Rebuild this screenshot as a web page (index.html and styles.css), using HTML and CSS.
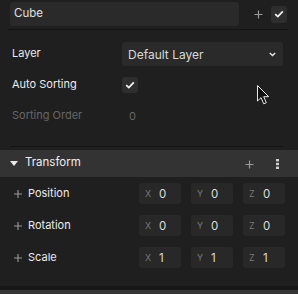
FILE: index.html
```html
<!DOCTYPE html>
<html>
<head>
<meta charset="utf-8">
<link rel="stylesheet" href="styles.css">
</head>
<body>
<div class="panel">
  <div class="top">
    <div class="name-input">Cube</div>
    <span class="icon-plus top-plus">
      <svg width="9" height="9" viewBox="0 0 9 9"><path d="M4.5 0.5v8M0.5 4.5h8" stroke="#9a9a9a" stroke-width="1.2"/></svg>
    </span>
    <span class="checkbox top-check">
      <svg width="10" height="8" viewBox="0 0 10 8"><path d="M1.2 4.2l2.6 2.4 5-5.2" fill="none" stroke="#f2f2f2" stroke-width="1.8"/></svg>
    </span>
  </div>
  <div class="divider d1"></div>

  <div class="props">
    <div class="prop">
      <span class="label">Layer</span>
      <div class="select">
        <span>Default Layer</span>
        <svg width="7" height="5" viewBox="0 0 7 5"><path d="M0.8 1l2.7 2.6L6.2 1" fill="none" stroke="#e6e6e6" stroke-width="1.4"/></svg>
      </div>
    </div>
    <div class="prop">
      <span class="label">Auto Sorting</span>
      <span class="checkbox">
        <svg width="10" height="8" viewBox="0 0 10 8"><path d="M1.2 4.2l2.6 2.4 5-5.2" fill="none" stroke="#f2f2f2" stroke-width="1.8"/></svg>
      </span>
    </div>
    <div class="prop dim">
      <span class="label">Sorting Order</span>
      <span class="value">0</span>
    </div>
  </div>
  <div class="divider d2"></div>

  <div class="section-head">
    <svg class="caret" width="8" height="5" viewBox="0 0 8 5"><path d="M0 0h8L4 5z" fill="#e8e8e8"/></svg>
    <span class="title">Transform</span>
    <span class="head-plus">
      <svg width="9" height="9" viewBox="0 0 9 9"><path d="M4.5 0.5v8M0.5 4.5h8" stroke="#9a9a9a" stroke-width="1.2"/></svg>
    </span>
    <span class="dots">
      <svg width="3" height="10" viewBox="0 0 3 10"><rect x="0" y="0" width="3" height="2.4" fill="#d0d0d0"/><rect x="0" y="3.8" width="3" height="2.4" fill="#d0d0d0"/><rect x="0" y="7.6" width="3" height="2.4" fill="#d0d0d0"/></svg>
    </span>
  </div>

  <div class="vectors">
    <div class="vec-row">
      <span class="vec-plus"><svg width="8" height="8" viewBox="0 0 8 8"><path d="M4 0v8M0 4h8" stroke="#9a9a9a" stroke-width="1.1"/></svg></span>
      <span class="vec-label">Position</span>
      <div class="fields">
        <div class="field"><span class="axis">X</span><span class="num">0</span></div>
        <div class="field"><span class="axis">Y</span><span class="num">0</span></div>
        <div class="field"><span class="axis">Z</span><span class="num">0</span></div>
      </div>
    </div>
    <div class="vec-row">
      <span class="vec-plus"><svg width="8" height="8" viewBox="0 0 8 8"><path d="M4 0v8M0 4h8" stroke="#9a9a9a" stroke-width="1.1"/></svg></span>
      <span class="vec-label">Rotation</span>
      <div class="fields">
        <div class="field"><span class="axis">X</span><span class="num">0</span></div>
        <div class="field"><span class="axis">Y</span><span class="num">0</span></div>
        <div class="field"><span class="axis">Z</span><span class="num">0</span></div>
      </div>
    </div>
    <div class="vec-row">
      <span class="vec-plus"><svg width="8" height="8" viewBox="0 0 8 8"><path d="M4 0v8M0 4h8" stroke="#9a9a9a" stroke-width="1.1"/></svg></span>
      <span class="vec-label">Scale</span>
      <div class="fields">
        <div class="field"><span class="axis">X</span><span class="num">1</span></div>
        <div class="field"><span class="axis">Y</span><span class="num">1</span></div>
        <div class="field"><span class="axis">Z</span><span class="num">1</span></div>
      </div>
    </div>
  </div>

  <div class="bottom-line"></div>
  <div class="bottom-bar"></div>

  <svg class="cursor" width="13" height="21" viewBox="0 0 13 21">
    <path d="M0.5 0.5v15.5l3.6-3.4 2.6 6.2 2.6-1.1-2.6-6h5z" fill="#111" stroke="#e8e8e8" stroke-width="1"/>
  </svg>
</div>
</body>
</html>
```

FILE: styles.css
```css
* { box-sizing: border-box; }
html, body {
  margin: 0;
  padding: 0;
  background: #1f1f1f;
}
body {
  width: 298px;
  height: 294px;
  overflow: hidden;
  font-family: Inter, "Noto Sans", sans-serif;
  color: #e6e6e6;
}
.panel {
  position: relative;
  width: 298px;
  height: 294px;
  display: flex;
  flex-direction: column;
}
.top {
  display: flex;
  align-items: center;
  height: 24px;
  margin-top: 2px;
  padding-left: 10px;
}
.name-input {
  width: 229px;
  height: 24px;
  background: #2a2a2a;
  border-radius: 3px;
  padding-left: 4px;
  font-size: 11.5px;
  line-height: 23px;
  color: #e0e0e0;
}
.top-plus {
  display: flex;
  margin-left: 15px;
}
.checkbox {
  width: 16px;
  height: 16px;
  background: #2e2e2e;
  border-radius: 3px;
  display: flex;
  align-items: center;
  justify-content: center;
}
.top-check {
  margin-left: 8px;
  width: 16px;
  height: 17px;
}
.divider {
  height: 1px;
  background: #141414;
}
.d1 { margin: 3px 10px 0 8px; }
.props {
  display: flex;
  flex-direction: column;
  gap: 7px;
  margin-top: 12px;
  padding-left: 12px;
}
.prop {
  display: flex;
  align-items: center;
  height: 24px;
}
.label {
  width: 110px;
  font-size: 11px;
  line-height: 14px;
  margin-top: -3px;
  color: #ececec;
}
.select {
  width: 161px;
  height: 24px;
  background: #2a2a2a;
  border-radius: 3px;
  display: flex;
  align-items: center;
  justify-content: space-between;
  padding: 0 7px 0 6px;
  font-size: 12px;
  color: #d8d8d8;
}
.dim .label, .dim .value { color: #666; }
.value {
  font-size: 11px;
  padding-left: 7px;
}
.d2 { margin: 18px 15px 0 10px; }
.section-head {
  margin-top: 3px;
  height: 27px;
  background: #333333;
  display: flex;
  align-items: center;
  padding-left: 10px;
}
.caret { margin-top: 0; }
.title {
  margin-left: 7px;
  font-size: 11.5px;
  line-height: 14px;
  margin-top: -3px;
  color: #eeeeee;
}
.head-plus {
  display: flex;
  margin-left: auto;
  margin-right: 22px;
  margin-top: 2px;
}
.dots {
  display: flex;
  margin-right: 19px;
}
.vectors {
  display: flex;
  flex-direction: column;
  gap: 11px;
  margin-top: 6px;
}
.vec-row {
  display: flex;
  align-items: center;
  height: 21px;
}
.vec-plus {
  display: flex;
  margin-left: 14px;
}
.vec-label {
  margin-left: 6px;
  width: 111px;
  font-size: 11px;
  line-height: 14px;
  margin-top: -2px;
  color: #ececec;
}
.fields {
  display: flex;
  gap: 10px;
}
.field {
  width: 42px;
  height: 21px;
  background: #282828;
  border-radius: 3px;
  display: flex;
  align-items: center;
  padding-left: 6px;
}
.axis {
  font-size: 9px;
  color: #777;
  width: 14px;
}
.num {
  font-size: 11.5px;
  color: #dcdcdc;
}
.bottom-line {
  margin-top: auto;
  height: 4px;
  background: #171717;
}
.bottom-bar {
  height: 4px;
  background: #363636;
}
.cursor {
  position: absolute;
  left: 257px;
  top: 85px;
}
```
